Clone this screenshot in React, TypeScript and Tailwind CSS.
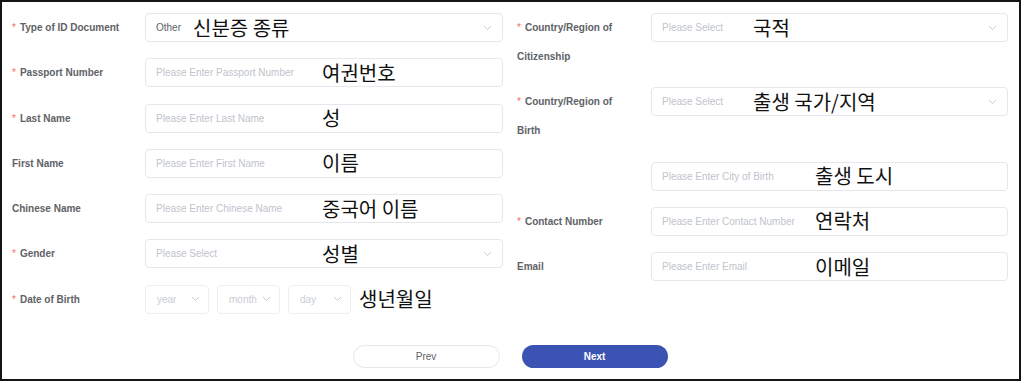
import React from "react";

const Chevron = () => (
  <svg width="9" height="6" viewBox="0 0 9 6" fill="none">
    <polyline points="1,1 4.5,4.5 8,1" stroke="#c8cbd2" strokeWidth="1" fill="none" />
  </svg>
);

const KO = "font-['Noto_Sans_CJK_KR','Noto_Sans',sans-serif]";

function Label({ text, req, w = "w-[133px] pr-[12px]" }: { text: string; req?: boolean; w?: string }) {
  return (
    <div className={`${w} shrink-0 text-[10px] font-bold leading-[29px] text-[#606266]`}>
      {req && <span className="mr-[4px] text-[#f56c6c] font-normal">*</span>}
      {text}
    </div>
  );
}

function Field({
  placeholder,
  value,
  select,
  ko,
  koLeft,
}: {
  placeholder?: string;
  value?: string;
  select?: boolean;
  ko: string;
  koLeft: string;
}) {
  return (
    <div className="relative flex h-[29px] flex-1 items-center justify-between rounded-[4px] border border-[#e4e7ed] bg-white pl-[10px] pr-[10px]">
      <span className={`text-[10px] ${value ? "text-[#606266]" : "text-[#c0c4cc]"}`}>{value ?? placeholder}</span>
      {select && <Chevron />}
      <span className={`absolute inset-y-0 ${koLeft} flex items-center text-[20px] leading-none text-[#111] ${KO}`}>{ko}</span>
    </div>
  );
}

function DateBox({ text, w }: { text: string; w: string }) {
  return (
    <div className={`flex h-[29px] ${w} items-center justify-between rounded-[4px] border border-[#eceef3] bg-white pl-[11px] pr-[8px]`}>
      <span className="text-[10px] text-[#c9ccd3]">{text}</span>
      <Chevron />
    </div>
  );
}

const RW = "w-[134px] pr-[24px]";

export default function App() {
  return (
    <div className="h-[383px] w-[1024px] bg-white font-['Liberation_Sans',Arial,sans-serif]">
      <div className="flex h-[381px] w-[1021px] flex-col border-2 border-[#141414] bg-white pl-[10px] pr-[11px] pt-[11px]">
        <div className="grid grid-cols-2 gap-x-[14px]">
          {/* left column */}
          <div className="flex flex-col gap-y-[16.3px]">
            <div className="flex">
              <Label text="Type of ID Document" req />
              <Field value="Other" select ko="신분증 종류" koLeft="left-[47px]" />
            </div>
            <div className="flex">
              <Label text="Passport Number" req />
              <Field placeholder="Please Enter Passport Number" ko="여권번호" koLeft="left-[176px]" />
            </div>
            <div className="flex">
              <Label text="Last Name" req />
              <Field placeholder="Please Enter Last Name" ko="성" koLeft="left-[176px]" />
            </div>
            <div className="flex">
              <Label text="First Name" />
              <Field placeholder="Please Enter First Name" ko="이름" koLeft="left-[176px]" />
            </div>
            <div className="flex">
              <Label text="Chinese Name" />
              <Field placeholder="Please Enter Chinese Name" ko="중국어 이름" koLeft="left-[176px]" />
            </div>
            <div className="flex">
              <Label text="Gender" req />
              <Field placeholder="Please Select" select ko="성별" koLeft="left-[176px]" />
            </div>
            <div className="flex">
              <Label text="Date of Birth" req />
              <div className="flex flex-1 items-center gap-x-[8px]">
                <DateBox text="year" w="w-[64px]" />
                <DateBox text="month" w="w-[63px]" />
                <DateBox text="day" w="w-[63px]" />
                <span className={`text-[20px] leading-none text-[#111] ${KO}`}>생년월일</span>
              </div>
            </div>
          </div>

          {/* right column */}
          <div className="flex flex-col gap-y-[16.3px]">
            <div className="flex items-start">
              <Label text="Country/Region of Citizenship" req w={RW} />
              <Field placeholder="Please Select" select ko="국적" koLeft="left-[101px]" />
            </div>
            <div className="flex items-start">
              <Label text="Country/Region of Birth" req w={RW} />
              <Field placeholder="Please Select" select ko="출생 국가/지역" koLeft="left-[101px]" />
            </div>
            <div className="flex">
              <Label text="" w={RW} />
              <Field placeholder="Please Enter City of Birth" ko="출생 도시" koLeft="left-[163px]" />
            </div>
            <div className="flex">
              <Label text="Contact Number" req w={RW} />
              <Field placeholder="Please Enter Contact Number" ko="연락처" koLeft="left-[163px]" />
            </div>
            <div className="flex">
              <Label text="Email" w={RW} />
              <Field placeholder="Please Enter Email" ko="이메일" koLeft="left-[163px]" />
            </div>
          </div>
        </div>

        <div className="mt-[31px] flex justify-center gap-x-[22px]">
          <button className="flex h-[23px] w-[147px] items-center justify-center rounded-full border border-[#e4e7ed] bg-white text-[10px] text-[#606266]">
            Prev
          </button>
          <button className="flex h-[23px] w-[146px] items-center justify-center rounded-full bg-[#3b54b4] text-[10px] font-bold text-white">
            Next
          </button>
        </div>
      </div>
    </div>
  );
}
